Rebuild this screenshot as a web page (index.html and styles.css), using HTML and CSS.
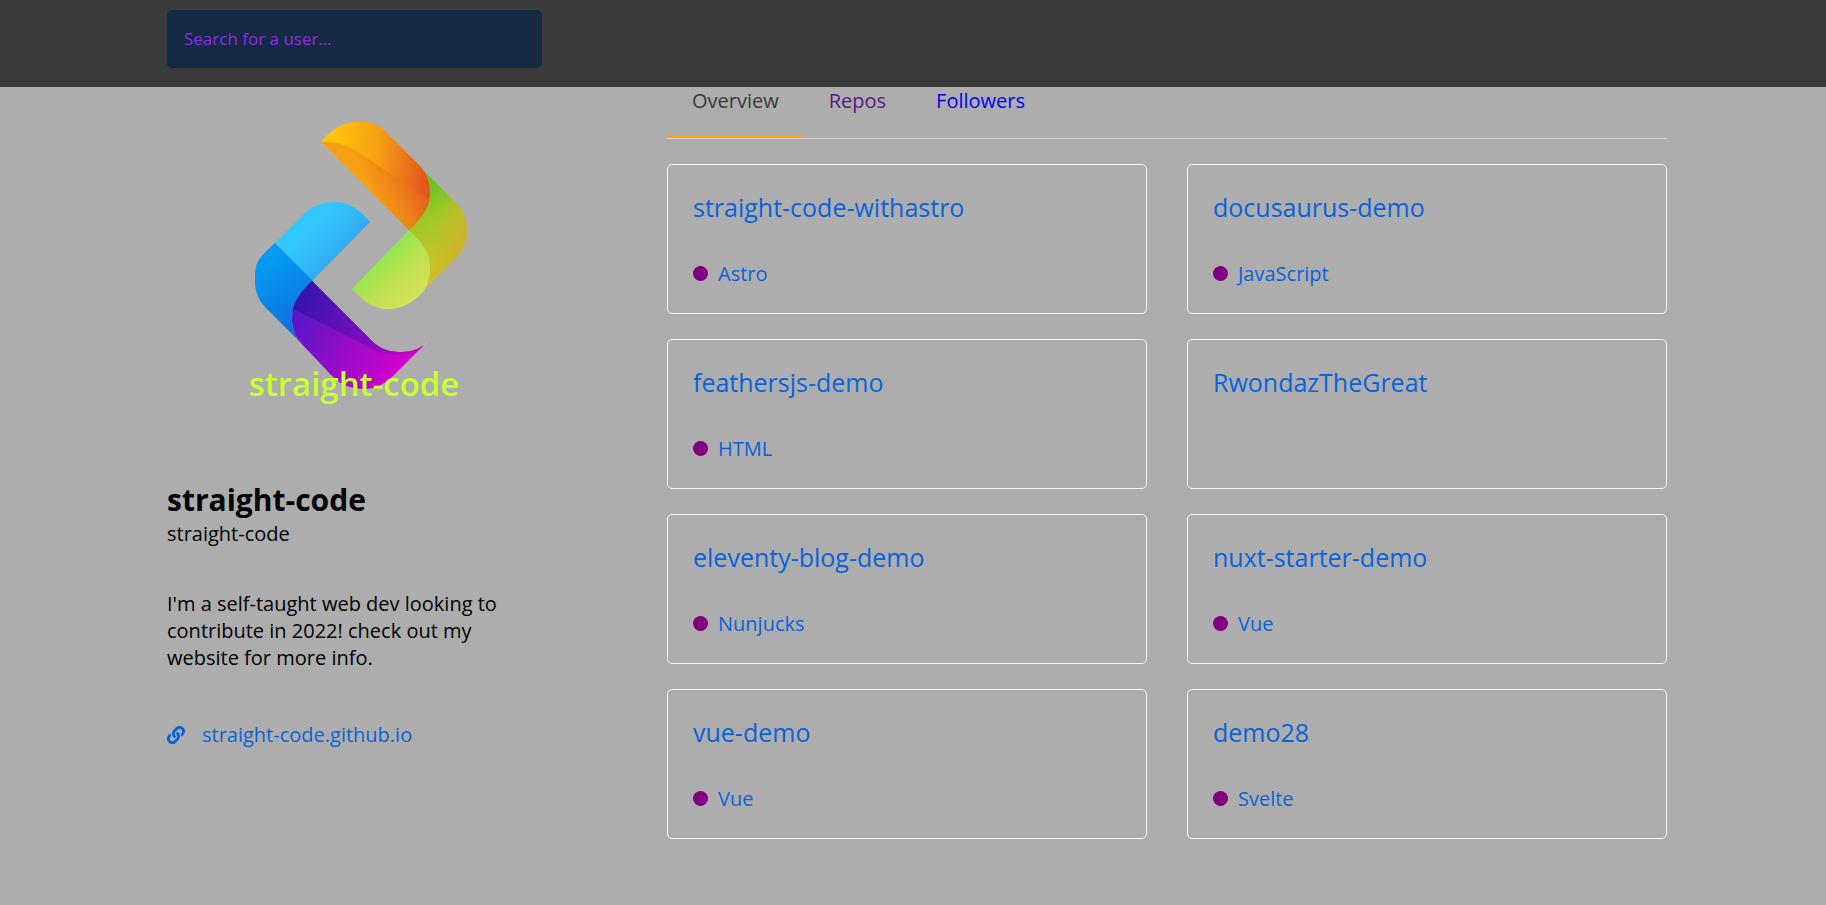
FILE: index.html
```html
<!DOCTYPE html>
<html lang="en">
<head>
<meta charset="utf-8">
<meta name="viewport" content="width=device-width, initial-scale=1">
<title>straight-code</title>
<link rel="stylesheet" href="styles.css">
</head>
<body>
<header class="topbar">
  <form class="container">
    <input class="search" type="search" aria-label="Search for a user" placeholder="Search for a user...">
  </form>
</header>
<div class="container layout">
  <aside class="profile">
    <svg class="avatar" viewBox="167 87 375 375" role="img" aria-label="straight-code logo">
      <defs>
        <linearGradient id="orange" gradientUnits="userSpaceOnUse" x1="330" y1="150" x2="428" y2="160"><stop offset="0" stop-color="#ffc50c"/><stop offset=".5" stop-color="#f59d14"/><stop offset="1" stop-color="#e2561c"/></linearGradient>
        <linearGradient id="orangeLow" gradientUnits="userSpaceOnUse" x1="375" y1="200" x2="425" y2="176"><stop offset="0" stop-color="#f69f13"/><stop offset=".5" stop-color="#ec7c19"/><stop offset="1" stop-color="#e0541e"/></linearGradient>
        <linearGradient id="green" gradientUnits="userSpaceOnUse" x1="415" y1="190" x2="445" y2="262"><stop offset="0" stop-color="#6cc322"/><stop offset=".4" stop-color="#9fc726"/><stop offset="1" stop-color="#cec429"/></linearGradient>
        <linearGradient id="olive" gradientUnits="userSpaceOnUse" x1="440" y1="215" x2="467" y2="222"><stop offset="0" stop-color="#c8b52a" stop-opacity="0"/><stop offset="1" stop-color="#c8b52a"/></linearGradient>
        <linearGradient id="lime" gradientUnits="userSpaceOnUse" x1="378" y1="262" x2="412" y2="300"><stop offset="0" stop-color="#93e650"/><stop offset=".5" stop-color="#c2e052"/><stop offset="1" stop-color="#d6e059"/></linearGradient>
        <linearGradient id="sky" gradientUnits="userSpaceOnUse" x1="308" y1="230" x2="342" y2="262"><stop offset="0" stop-color="#33c7ff"/><stop offset="1" stop-color="#32a7f3"/></linearGradient>
        <linearGradient id="blue" gradientUnits="userSpaceOnUse" x1="262" y1="265" x2="300" y2="325"><stop offset="0" stop-color="#049bf2"/><stop offset="1" stop-color="#1070df"/></linearGradient>
        <linearGradient id="purple" gradientUnits="userSpaceOnUse" x1="295" y1="310" x2="402" y2="365"><stop offset="0" stop-color="#5419c8"/><stop offset=".55" stop-color="#9b0bc8"/><stop offset="1" stop-color="#d000cd"/></linearGradient>
        <linearGradient id="indigo" gradientUnits="userSpaceOnUse" x1="305" y1="295" x2="410" y2="358"><stop offset="0" stop-color="#3a14b1"/><stop offset=".6" stop-color="#7a0dba"/><stop offset="1" stop-color="#bd03c3"/></linearGradient>
      </defs>
      <path fill="url(#green)" d="M422 169 455 202C463 210 467 220 467 231S463 251 455 259L420 293 409 230Z"/>
      <path fill="url(#olive)" d="M422 169 455 202C463 210 467 220 467 231S463 251 455 259L430 282 430 200Z"/>
      <path fill="url(#lime)" d="M409 230 352 289C364 302 374 309 388 309 402 309 413 303 424 291 428 284 430 276 430 267 430 253 423 243 409 230Z"/>
      <path fill="url(#orange)" d="M321 142C333 128 343 122 356 122H366C375 123 381 127 388 134L422 168C427 175 430 183 430 193 430 206 424 215 409 230Z"/>
      <path fill="url(#orangeLow)" d="M321 142C337 141 347 145 361 154L407 185 429 199C427 210 421 218 409 230Z"/>
      <path fill="url(#sky)" d="M275 243 305 213C313 206 322 202 334 202 350 202 360 210 370 222L312 281Z"/>
      <path fill="url(#blue)" d="M275 243 313 281C299 293 292 303 292 319 292 329 295 335 299 341L265 307C258 299 255 291 255 282V275C255 260 263 254 275 243Z"/>
      <path fill="url(#purple)" d="M312 281 373 342C382 350 391 352 402 352 412 352 418 349 424 345L393 376C384 385 374 389 364 389 350 389 340 384 332 376L299 341C294 334 292 327 292 318 292 302 300 293 312 281Z"/>
      <path fill="url(#indigo)" d="M312 281 373 342C382 350 391 352 402 352 412 352 418 349 424 345L419 350C405 357 386 356 371 348L293 309C296 297 302 291 312 281Z"/>
      <path class="tip" d="M424 345 429 340"/>
      <text class="wordmark" x="354" y="396" text-anchor="middle">straight-code</text>
    </svg>
    <h1 class="name">straight-code</h1>
    <p class="login">straight-code</p>
    <p class="bio">I'm a self-taught web dev looking to contribute in 2022! check out my website for more info.</p>
    <a class="website" href="#">
      <svg class="link-icon" viewBox="0 0 512 512" aria-hidden="true"><path d="M326.612 185.391c59.747 59.809 58.927 155.698.36 214.59-.11.12-.24.25-.36.37l-67.2 67.2c-59.27 59.27-155.699 59.262-214.96 0-59.27-59.26-59.27-155.7 0-214.96l37.106-37.106c9.84-9.84 26.786-3.3 27.294 10.606.648 17.722 3.826 35.527 9.69 52.721 1.986 5.822.567 12.262-3.783 16.612l-13.087 13.087c-28.026 28.026-28.905 73.66-1.155 101.96 28.024 28.579 74.086 28.749 102.325.51l67.2-67.19c28.191-28.191 28.073-73.757 0-101.83-3.701-3.694-7.429-6.564-10.341-8.569a16.037 16.037 0 0 1-6.947-12.606c-.396-10.567 3.348-21.456 11.698-29.806l21.054-21.055c5.521-5.521 14.182-6.199 20.584-1.731a152.482 152.482 0 0 1 20.522 17.197zM467.547 44.449c-59.261-59.262-155.69-59.27-214.96 0l-67.2 67.2c-.12.12-.25.25-.36.37-58.566 58.892-59.387 154.781.36 214.59a152.454 152.454 0 0 0 20.521 17.196c6.402 4.468 15.064 3.789 20.584-1.731l21.054-21.055c8.35-8.35 12.094-19.239 11.698-29.806a16.037 16.037 0 0 0-6.947-12.606c-2.912-2.005-6.64-4.875-10.341-8.569-28.073-28.073-28.191-73.639 0-101.83l67.2-67.19c28.239-28.239 74.3-28.069 102.325.51 27.75 28.3 26.872 73.934-1.155 101.96l-13.087 13.087c-4.35 4.35-5.769 10.79-3.783 16.612 5.864 17.194 9.042 34.999 9.69 52.721.509 13.906 17.454 20.446 27.294 10.606l37.106-37.106c59.271-59.259 59.271-155.699.001-214.959z"/></svg>
      straight-code.github.io
    </a>
  </aside>
  <main>
    <nav class="tabs">
      <a class="tab active" href="#">Overview</a>
      <a class="tab visited" href="#">Repos</a>
      <a class="tab" href="#">Followers</a>
    </nav>
    <div class="repos">
      <a class="card" href="#"><span class="title">straight-code-withastro</span><span class="language">Astro</span></a>
      <a class="card" href="#"><span class="title">docusaurus-demo</span><span class="language">JavaScript</span></a>
      <a class="card" href="#"><span class="title">feathersjs-demo</span><span class="language">HTML</span></a>
      <a class="card" href="#"><span class="title">RwondazTheGreat</span></a>
      <a class="card" href="#"><span class="title">eleventy-blog-demo</span><span class="language">Nunjucks</span></a>
      <a class="card" href="#"><span class="title">nuxt-starter-demo</span><span class="language">Vue</span></a>
      <a class="card" href="#"><span class="title">vue-demo</span><span class="language">Vue</span></a>
      <a class="card" href="#"><span class="title">demo28</span><span class="language">Svelte</span></a>
    </div>
  </main>
</div>
</body>
</html>
```
FILE: styles.css
```css
* {
  box-sizing: border-box;
}

body {
  margin: 0;
  min-height: 100vh;
  background: #adadad;
  color: #000;
  font: 400 20px/27px "Open Sans", sans-serif;
}

a {
  color: #0963de;
  text-decoration: none;
}

.container {
  max-width: 1508px;
  margin: 0 auto;
  padding-left: 8px;
}

.topbar {
  padding: 10px 0 19px;
  background: #3a3a3a;
}

.search {
  display: block;
  width: 375px;
  max-width: 100%;
  height: 58px;
  padding: 0 17px 1px;
  border: 0;
  border-radius: 5px;
  background: #152b43;
  color: #fff;
  font: 400 17px "Open Sans", sans-serif;
  appearance: none;
}

.search::placeholder {
  color: #8a2be2;
  opacity: 1;
}

.layout {
  display: grid;
  grid-template-columns: 1fr 2fr;
  padding-bottom: 40px;
}

.profile {
  padding-right: 125px;
}

.avatar {
  display: block;
  width: 100%;
}

.tip {
  stroke: #c9b5c9;
  stroke-width: 1;
}

.wordmark {
  fill: #c8ff32;
  font: 600 33px "Open Sans", sans-serif;
}

.name {
  margin: 17px 0 0;
  font-size: 30px;
  font-weight: 700;
  line-height: 41px;
}

.login {
  margin: 0;
}

.bio {
  margin: 43px 0 50px;
}

.website {
  display: flex;
  align-items: center;
  gap: 17px;
}

.link-icon {
  width: 18px;
  height: 18px;
  fill: currentColor;
}

.tabs {
  display: flex;
  margin-bottom: 25px;
  padding-bottom: 1px;
  border-bottom: 1px solid #d3d3d3;
}

.tab {
  padding: 0 25px 21px;
  border-bottom: 2px solid transparent;
  color: #00f;
}

.tab.visited {
  color: #551a8b;
}

.tab.active {
  border-color: orange;
  color: #3a3a3a;
}

.repos {
  display: grid;
  grid-template-columns: 1fr 1fr;
  gap: 25px 40px;
}

.card {
  display: flex;
  flex-direction: column;
  justify-content: space-between;
  min-height: 150px;
  padding: 25px 25px 26px;
  border: 1px solid #f5f5f5;
  border-radius: 5px;
}

.title {
  font-size: 25px;
  line-height: 34px;
}

.language {
  display: flex;
  align-items: center;
  gap: 10px;
}

.language::before {
  content: "";
  width: 15px;
  height: 15px;
  border-radius: 50%;
  background: purple;
}
```
